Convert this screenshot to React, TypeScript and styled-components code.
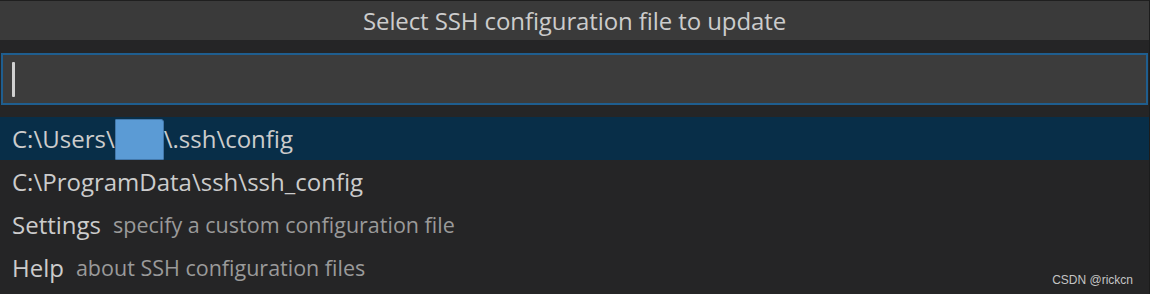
import React from "react";
import styled, { createGlobalStyle } from "styled-components";

const Global = createGlobalStyle`
  html, body { margin: 0; padding: 0; background: #252526; }
  body { width: 1150px; height: 294px; overflow: hidden; }
`;

const FONT = `"Open Sans", "Noto Sans", sans-serif`;

const Panel = styled.div`
  width: 1150px;
  height: 294px;
  box-sizing: border-box;
  background: #252526;
  border-right: 1px solid #1c1c1c;
  display: flex;
  flex-direction: column;
  font-family: ${FONT};
  position: relative;
`;

const Title = styled.div`
  height: 40px;
  box-sizing: border-box;
  border-top: 1px solid #1f1f1f;
  background: #3a3a3a;
  color: #cccccc;
  font-size: 24px;
  letter-spacing: -0.1px;
  display: flex;
  align-items: center;
  justify-content: center;
`;

const InputWrap = styled.div`
  padding: 13px 1px 12px 1px;
`;

const Input = styled.div`
  height: 52px;
  box-sizing: border-box;
  border: 2px solid #1f5e8f;
  background: #3c3c3c;
  display: flex;
  align-items: center;
  padding-left: 9px;
`;

const Caret = styled.div`
  width: 3px;
  height: 35px;
  background: #d0d0d0;
  border-radius: 1px;
`;

const List = styled.div`
  display: flex;
  flex-direction: column;
`;

const Row = styled.div<{ $selected?: boolean }>`
  height: 43px;
  display: flex;
  align-items: center;
  padding-left: 12px;
  background: ${(p) => (p.$selected ? "#082e48" : "transparent")};
  color: #cccccc;
  font-size: 24px;
  white-space: nowrap;
`;

const Desc = styled.span`
  margin-left: 12px;
  font-size: 21.5px;
  color: #9a9a9a;
`;

const Redact = styled.span`
  display: inline-block;
  width: 47px;
  height: 39px;
  margin-top: 2px;
  background: #5b9bd5;
  border: 1px solid #4378ab;
  border-radius: 1px 3px 1px 1px;
`;

const Watermark = styled.div`
  position: absolute;
  right: 16px;
  bottom: 7px;
  font-family: "Liberation Sans", Arial, sans-serif;
  font-size: 12px;
  color: #c4c4c4;
`;

export default function App() {
  return (
    <>
      <Global />
      <Panel>
        <Title>Select SSH configuration file to update</Title>
        <InputWrap>
          <Input>
            <Caret />
          </Input>
        </InputWrap>
        <List>
          <Row $selected>
            C:\Users\<Redact />\.ssh\config
          </Row>
          <Row>C:\ProgramData\ssh\ssh_config</Row>
          <Row>
            Settings<Desc>specify a custom configuration file</Desc>
          </Row>
          <Row>
            Help<Desc>about SSH configuration files</Desc>
          </Row>
        </List>
        <Watermark>CSDN @rickcn</Watermark>
      </Panel>
    </>
  );
}
